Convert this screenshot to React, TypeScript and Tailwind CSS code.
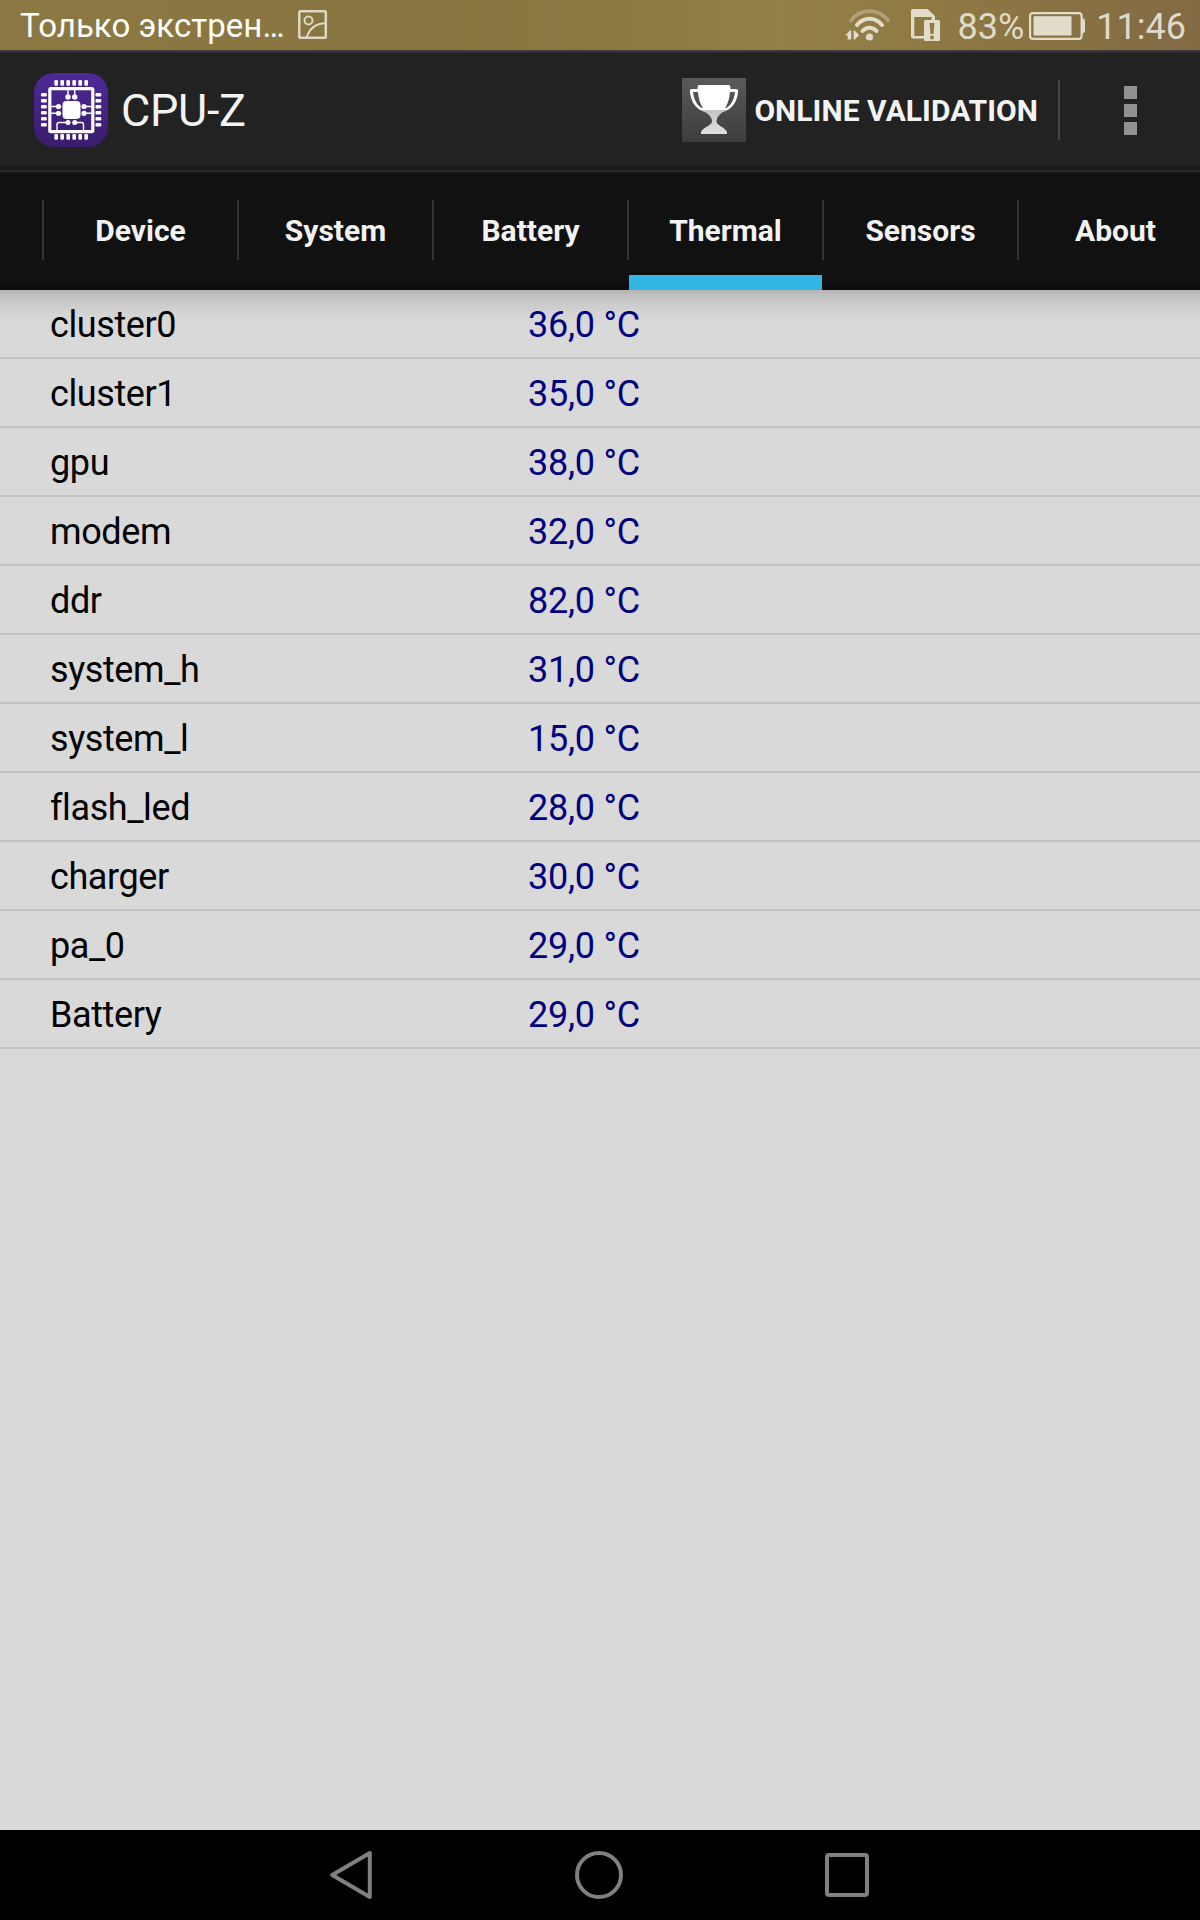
const readings: [string, string][] = [
  ["cluster0", "36,0 °C"],
  ["cluster1", "35,0 °C"],
  ["gpu", "38,0 °C"],
  ["modem", "32,0 °C"],
  ["ddr", "82,0 °C"],
  ["system_h", "31,0 °C"],
  ["system_l", "15,0 °C"],
  ["flash_led", "28,0 °C"],
  ["charger", "30,0 °C"],
  ["pa_0", "29,0 °C"],
  ["Battery", "29,0 °C"],
];

const tabs = ["Device", "System", "Battery", "Thermal", "Sensors", "About"];

function PictureIcon() {
  return (
    <svg className="ml-[14px] size-[30px]" viewBox="0 0 30 30" fill="none" stroke="#e0d8c4" strokeWidth="2.500">
      <rect x="1.300" y="1.300" width="26.500" height="26.500" rx="1" />
      <circle cx="10.5" cy="10.5" r="4" strokeWidth="2" />
      <path d="M8.5 28C11 19 18 13.5 28 13" strokeWidth="2.200" />
    </svg>
  );
}

function WifiIcon() {
  return (
    <svg className="h-8 w-[46px]" viewBox="0 0 46 32" fill="none" strokeLinecap="round">
      <path d="M6 11.500C15.500 -1 33.500 -1 43 11.500" stroke="#e0d8c4" strokeOpacity=".4" strokeWidth="3.600" />
      <path d="M12 16C19 7.700 30 7.700 37 16" stroke="#e3dccb" strokeWidth="4" />
      <path d="M17.500 22C21.500 17.500 27.500 17.500 31.500 22" stroke="#e3dccb" strokeWidth="4" />
      <circle cx="24.500" cy="28" r="3.600" fill="#e3dccb" />
      <path d="M.2 26.500L5 21.500H6.200V30.500H2.700V26.500ZM8.700 21.500V30.500H9.700L14.200 26.200L9.700 21.500Z" fill="#e3dccb" />
    </svg>
  );
}

function SimIcon() {
  return (
    <svg className="ml-5 h-8 w-[30px]" viewBox="0 0 30 32">
      <path d="M2 0H16.500L24 7V11H20.500V8H3.300V27H13V29.500H2Q0 29.500 0 27.500V2Q0 0 2 0Z" fill="#e3dccb" />
      <rect x="13" y="11" width="16" height="21" rx="1.500" fill="#e3dccb" />
      <path d="M18.500 14H23.500L22.500 25H19.500Z" fill="#8f7c45" />
      <circle cx="21" cy="28.500" r="2" fill="#8f7c45" />
    </svg>
  );
}

function BatteryIcon() {
  return (
    <svg className="ml-[5px] mt-[2px] h-7 w-14" viewBox="0 0 56 28">
      <rect x="1.100" y="1.100" width="51.500" height="25.800" rx="3" fill="none" stroke="#e3dccb" strokeWidth="2.200" />
      <path d="M53 6.500H54.500Q56 7 56 8.500V19Q56 20.500 54.500 21H53Z" fill="#e3dccb" />
      <rect x="4.500" y="4.200" width="38" height="19.300" fill="#e3dccb" />
    </svg>
  );
}

function StatusBar() {
  return (
    <div className="flex h-[50px] items-center bg-[linear-gradient(90deg,#8b7843_0%,#88753f_35%,#8d7a43_55%,#938046_65%,#8d7843_80%,#826a43_100%)] pl-5 pr-[14px]">
      <span className="w-[264px] whitespace-nowrap pt-[2px] text-[33px] leading-[50px] tracking-[0.05px] text-white">Только экстрен…</span>
      <PictureIcon />
      <div className="ml-auto flex items-center text-[36px] leading-[48px] text-[#e0dacd]">
        <WifiIcon />
        <SimIcon />
        <span className="ml-[17px] pt-[3px]">83%</span>
        <BatteryIcon />
        <span className="ml-[11px] pt-[3px]">11:46</span>
      </div>
    </div>
  );
}

const pinOffsets = [20.700, 26.700, 32.700, 38.700, 44.700, 50.700];

function AppIcon() {
  return (
    <svg className="size-[74px]" viewBox="0 0 74 74">
      <defs>
        <linearGradient id="chip" x1="0" y1="0" x2="0" y2="1">
          <stop offset="0" stopColor="#4d2a99" />
          <stop offset="1" stopColor="#3a1c6c" />
        </linearGradient>
      </defs>
      <rect width="74" height="74" rx="20" fill="url(#chip)" />
      <g fill="#fff">
        {pinOffsets.map((p) => (
          <g key={p}>
            <rect x={p - 0.3} y="7" width="3.600" height="5.800" rx="1.200" />
            <rect x={p - 0.3} y="61" width="3.600" height="5.800" rx="1.200" />
            <rect x="7" y={p - 0.8} width="5.800" height="3.600" rx="1.200" />
            <rect x="61.500" y={p - 0.8} width="5.800" height="3.600" rx="1.200" />
          </g>
        ))}
        <rect x="28.500" y="28" width="18" height="18" rx="4" />
        <circle cx="34" cy="24" r="2.700" />
        <circle cx="40.700" cy="24" r="2.700" />
        <circle cx="34" cy="49.500" r="2.500" />
        <circle cx="40.700" cy="49.500" r="2.500" />
        <circle cx="24.500" cy="33.500" r="2.600" />
        <circle cx="24.500" cy="40.300" r="2.600" />
        <circle cx="50" cy="33.500" r="2.600" />
        <circle cx="50" cy="40.300" r="2.600" />
      </g>
      <rect x="15.800" y="15.600" width="43" height="43" rx="1" fill="none" stroke="#fff" strokeWidth="3.200" />
      <path
        d="M34 17V24M40.700 17V24M17 33.500H24M17 40.300H24M50 33.500H58M50 40.300H58M34 49.500H25Q23 49.500 23 51.500V58M40.700 49.500H47.500Q49.500 49.500 49.500 51.500V58"
        fill="none"
        stroke="#fff"
        strokeWidth="1.400"
      />
    </svg>
  );
}

function TrophyIcon() {
  return (
    <svg className="size-16" viewBox="0 0 64 64">
      <defs>
        <linearGradient id="tile" x1="0" y1="0" x2="0" y2="1">
          <stop offset="0" stopColor="#5a5a5a" />
          <stop offset="1" stopColor="#3d3d3d" />
        </linearGradient>
        <linearGradient id="cup" x1="0" y1="0" x2="0" y2="1">
          <stop offset="0" stopColor="#fff" />
          <stop offset=".5" stopColor="#fff" />
          <stop offset=".51" stopColor="#c4c4c4" />
          <stop offset="1" stopColor="#e0e0e0" />
        </linearGradient>
      </defs>
      <rect width="64" height="64" fill="url(#tile)" />
      <path
        d="M17 7H47Q48.500 7 48.500 11H54Q56.500 11 56 14C55 25 49 32 40 34.500C37 37 34.500 40 34.500 43C34.500 48 42 48 45 54V56H19V54C22 48 30 48 30 43C30 40 27.500 37 24 34.500C15 32 9 25 8 14Q7.500 11 10 11H15.500Q15.500 7 17 7ZM16 14H11C12 22 15 28 21 30.500C18 26 16.500 20 16 14ZM48 14C47.500 20 46 26 43 30.500C49 28 52 22 53 14Z"
        fill="url(#cup)"
        fillRule="evenodd"
      />
    </svg>
  );
}

function ActionBar() {
  return (
    <header className="flex h-[123px] flex-col bg-[#222]">
      <div className="h-[2px] bg-[#3a3a3a]" />
      <div className="h-px bg-[#2c2c2c]" />
      <div className="flex h-[112px] items-center pl-[34px] pr-[63px] pt-[2px]">
        <AppIcon />
        <h1 className="ml-[13px] pt-px text-[45px] leading-none tracking-[-0.3px] text-[#f3f3f3]">CPU-Z</h1>
        <div className="ml-auto flex items-center">
          <TrophyIcon />
          <span className="ml-2 pt-px text-[30px] font-bold leading-none tracking-[0.05px] text-[#f3f3f3]">ONLINE VALIDATION</span>
          <div className="ml-5 h-[60px] w-[2px] bg-[#444]" />
          <div className="ml-16 flex flex-col gap-[5px]">
            <div className="size-[13px] bg-[#919191]" />
            <div className="size-[13px] bg-[#919191]" />
            <div className="size-[13px] bg-[#919191]" />
          </div>
        </div>
      </div>
      <div className="h-[5px] bg-[#1b1b1b]" />
      <div className="h-[2px] bg-[#2a2a2a]" />
      <div className="h-px bg-[#1a1a1a]" />
    </header>
  );
}

function TabBar() {
  return (
    <nav className="flex h-[117px] w-full overflow-hidden bg-[linear-gradient(180deg,#111_112px,#0d0d0d_112px)] pl-[42px]">
      {tabs.map((tab) => (
        <div key={tab} className="flex h-[117px] w-[195px] shrink-0 flex-col">
          <div className="mt-[27px] flex h-[60px] items-center justify-center border-l-2 border-[#333] pt-[2px] text-[30px] font-bold leading-none text-[#f3f3f3]">
            {tab}
          </div>
          {tab === "Thermal" && <div className="ml-[2px] mt-[15px] h-[15px] bg-[#33b5e5]" />}
        </div>
      ))}
    </nav>
  );
}

function NavBar() {
  return (
    <footer className="flex h-[90px] items-center bg-black pl-[330px]">
      <svg className="h-[54px] w-[42px]" viewBox="0 0 42 54" fill="none" stroke="#808080" strokeWidth="4" strokeLinejoin="round">
        <path d="M39.800 5V49L2.200 27Z" />
      </svg>
      <svg className="ml-[202px] size-[50px]" viewBox="0 0 50 50" fill="none" stroke="#808080" strokeWidth="4">
        <circle cx="25" cy="25" r="22" />
      </svg>
      <svg className="ml-[201px] size-11" viewBox="0 0 44 44" fill="none" stroke="#808080" strokeWidth="4">
        <rect x="2" y="2" width="40" height="40" rx="2" />
      </svg>
    </footer>
  );
}

export default function App() {
  return (
    <div className="flex h-[1920px] w-[1200px] flex-col overflow-hidden bg-[#d9d9d9] font-['Roboto',sans-serif]">
      <StatusBar />
      <ActionBar />
      <TabBar />
      <main className="flex-1 bg-[linear-gradient(180deg,#b2b2b2_0px,#c3c3c3_6px,#cccccc_15px,#d4d4d4_24px,#d9d9d9_36px)]">
        {readings.map(([name, value]) => (
          <div key={name} className="flex h-[69px] items-center border-b-2 border-[#c2c2c2] pl-[50px] pt-[2px] text-[36px] leading-none">
            <span className="w-[478px] tracking-[-0.4px] text-black">{name}</span>
            <span className="tracking-[-0.25px] text-[#000080]">{value}</span>
          </div>
        ))}
      </main>
      <NavBar />
    </div>
  );
}
